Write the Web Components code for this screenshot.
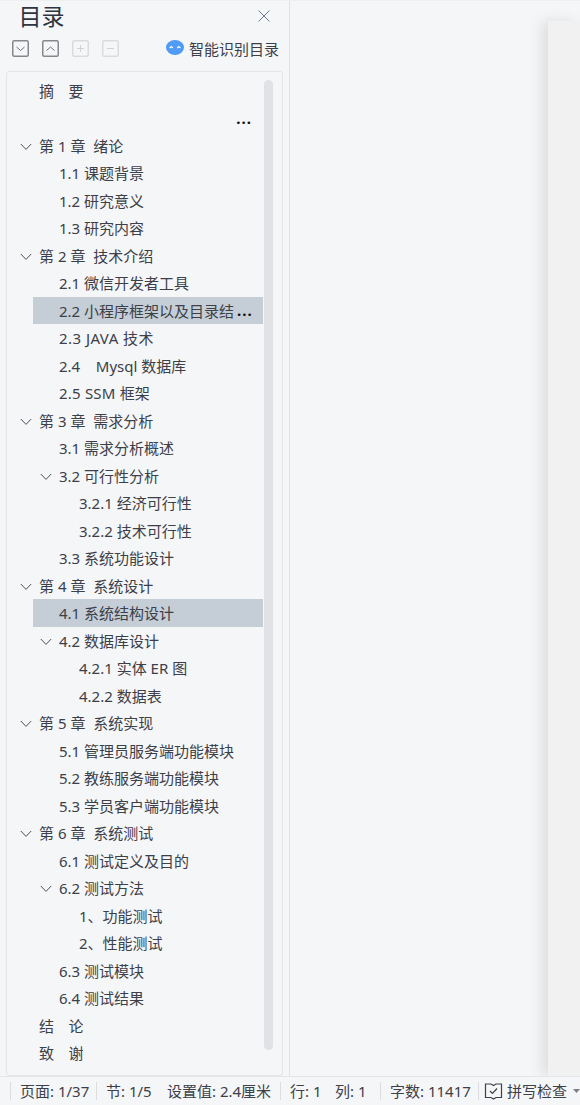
<!DOCTYPE html>
<html lang="zh-CN">
<head>
<meta charset="utf-8">
<style>
html, body { margin: 0; height: 100%; overflow: hidden; background: #f5f6f8; }
body { font-family: "Noto Sans", "Noto Sans CJK SC", sans-serif; color: #3c4048; }
</style>
</head>
<body>
<doc-window>
  <toc-panel slot="side"></toc-panel>
  <status-bar slot="status"></status-bar>
</doc-window>

<script>
// level: 0 chapter, 1 section, 2 subsection. open = has expand arrow
const tocRows = [
    { text: "摘\u00a0\u00a0\u00a0\u00a0要", level: 0, spacing: -0.2 },
    { text: "...", level: 0, dots: true },
    { text: "第 1 章  绪论", level: 0, open: true },
    { text: "1.1 课题背景", level: 1 },
    { text: "1.2 研究意义", level: 1 },
    { text: "1.3 研究内容", level: 1 },
    { text: "第 2 章  技术介绍", level: 0, open: true },
    { text: "2.1 微信开发者工具", level: 1 },
    { text: "2.2 小程序框架以及目录结", level: 1, selected: true, more: true },
    { text: "2.3 JAVA 技术", level: 1, spacing: 0.45 },
    { text: "2.4\u00a0\u00a0\u00a0\u00a0Mysql 数据库", level: 1 },
    { text: "2.5 SSM 框架", level: 1, spacing: 0.2 },
    { text: "第 3 章  需求分析", level: 0, open: true },
    { text: "3.1 需求分析概述", level: 1 },
    { text: "3.2 可行性分析", level: 1, open: true },
    { text: "3.2.1 经济可行性", level: 2 },
    { text: "3.2.2 技术可行性", level: 2 },
    { text: "3.3 系统功能设计", level: 1 },
    { text: "第 4 章  系统设计", level: 0, open: true },
    { text: "4.1 系统结构设计", level: 1, selected: true },
    { text: "4.2 数据库设计", level: 1, open: true },
    { text: "4.2.1 实体 ER 图", level: 2 },
    { text: "4.2.2 数据表", level: 2 },
    { text: "第 5 章  系统实现", level: 0, open: true },
    { text: "5.1 管理员服务端功能模块", level: 1 },
    { text: "5.2 教练服务端功能模块", level: 1 },
    { text: "5.3 学员客户端功能模块", level: 1 },
    { text: "第 6 章  系统测试", level: 0, open: true },
    { text: "6.1 测试定义及目的", level: 1 },
    { text: "6.2 测试方法", level: 1, open: true },
    { text: "1、功能测试", level: 2 },
    { text: "2、性能测试", level: 2 },
    { text: "6.3 测试模块", level: 1 },
    { text: "6.4 测试结果", level: 1 },
    { text: "结\u00a0\u00a0\u00a0\u00a0论", level: 0, spacing: -0.2 },
    { text: "致\u00a0\u00a0\u00a0\u00a0谢", level: 0, spacing: -0.2 }
];

class DocWindow extends HTMLElement {
    constructor() {
        super()
        const shadow = this.attachShadow({ mode: "open" });
        shadow.innerHTML = `
<style>
:host { display: grid; grid-template-rows: 1076px 29px; height: 1105px; width: 580px; overflow: hidden; }
.top { display: flex; min-height: 0; border-top: 1px solid #eeeff1; box-sizing: border-box; }
.canvas { flex: 1; display: flex; justify-content: flex-end; padding-top: 20px; overflow: hidden; }
.page { width: 32px; background: #f1f1f1; box-shadow: -6px 0 14px rgba(0,0,0,0.10); }
</style>
<div class="top">
  <slot name="side"></slot>
  <div class="canvas"><div class="page"></div></div>
</div>
<slot name="status"></slot>`;
    }
}

class TocPanel extends HTMLElement {
    constructor() {
        super()
        const shadow = this.attachShadow({ mode: "open" });
        shadow.innerHTML = `
<style>
:host { display: flex; flex-direction: column; width: 290px; flex: none; box-sizing: border-box; border-right: 1px solid #dfe1e5; padding-left: 6px; padding-right: 6px; }
.title { display: flex; justify-content: space-between; align-items: center; height: 30px; padding: 0 12px 0 12.5px; }
h1 { margin: 0; font-size: 23px; font-weight: 400; color: #2f3540; line-height: 30px; }
.tools { display: flex; align-items: center; height: 35px; margin-bottom: 5px; padding-left: 6px; padding-right: 4px; }
.tools tool-btn + tool-btn { margin-left: 13px; }
.smart { margin-left: auto; display: flex; align-items: center; gap: 5px; font-size: 15px; color: #3c4048; }
.smart svg { margin-bottom: 3px; }
.list { flex: 1; min-height: 0; box-sizing: border-box; border: 1px solid #e3e5e9; border-radius: 3px; padding-top: 4.9px; position: relative; overflow: hidden; }
.thumb { position: absolute; left: 257px; top: 8px; width: 9px; height: 970px; border-radius: 5px; background: #e0e2e5; }
svg { display: block; }
</style>
<div class="title">
  <h1>目录</h1>
  <svg width="14" height="14" viewBox="0 0 14 14" fill="none" stroke="#6f7a94" stroke-width="1"><path d="M1.5 1.5l11 11M12.5 1.5l-11 11"/></svg>
</div>
<div class="tools">
  <tool-btn kind="down"></tool-btn>
  <tool-btn kind="up"></tool-btn>
  <tool-btn kind="plus" faded></tool-btn>
  <tool-btn kind="minus" faded></tool-btn>
  <div class="smart">
    <svg width="18" height="15" viewBox="0 0 18 15"><ellipse cx="9" cy="7.5" rx="9" ry="7.5" fill="#4f9bf5"/><path d="M3.6 8l1.6-1.4L6.8 8M11.2 8l1.6-1.4L14.4 8" fill="none" stroke="#fff" stroke-width="1.2"/></svg>
    <span>智能识别目录</span>
  </div>
</div>
<div class="list"><div class="thumb"></div></div>`;
        const list = shadow.querySelector(".list");
        tocRows.forEach(r => {
            const row = document.createElement("toc-row");
            row.setAttribute("level", r.level);
            row.textContent = r.text;
            if (r.open) row.setAttribute("open", "");
            if (r.selected) row.setAttribute("selected", "");
            if (r.more) row.setAttribute("more", "");
            if (r.dots) row.setAttribute("dots", "");
            if (r.spacing) row.style.letterSpacing = r.spacing + "px";
            list.append(row);
        });
    }
}

class ToolBtn extends HTMLElement {
    connectedCallback() {
        const glyphs = {
            down: "M4.5 7l4 3.5 4-3.5",
            up: "M4.5 10.5l4-3.5 4 3.5",
            plus: "M5 8.5h7M8.5 5v7",
            minus: "M5 8.5h7"
        };
        const faded = this.hasAttribute("faded");
        const c = faded ? "#d9dbde" : "#85888d";
        const ink = faded ? "#d0d2d6" : "#6e7178";
        const shadow = this.attachShadow({ mode: "open" });
        shadow.innerHTML = `
<style>:host { display: block; width: 17px; height: 17px; } svg { display: block; }</style>
<svg width="17" height="17" viewBox="0 0 17 17" fill="none">
  <rect x="0.75" y="0.75" width="15.5" height="15.5" rx="1.5" stroke="${c}" stroke-width="1.5"/>
  <path d="${glyphs[this.getAttribute("kind")]}" stroke="${ink}" stroke-width="1"/>
</svg>`;
    }
}

class TocRow extends HTMLElement {
    connectedCallback() {
        const level = +this.getAttribute("level");
        const shadow = this.attachShadow({ mode: "open" });
        shadow.innerHTML = `
<style>
:host { display: block; height: 27.5px; font-size: 15px; line-height: 27.5px; width: 256px; }
.in { height: 100%; box-sizing: border-box; display: flex; align-items: center; position: relative; margin-left: ${level ? 26 : 0}px; padding-left: ${level ? level * 20 + 6 : 32}px; }
:host([selected]) .in { background: #c5ced6; }
.t { white-space: pre; overflow: hidden; min-width: 0; padding-top: 2px; }
.more { display: none; flex: none; color: #111; font-weight: 700; margin-left: 3px; letter-spacing: 1px; }
:host([more]) .more { display: block; }
:host([dots]) .in { justify-content: flex-end; padding-right: 11px; }
:host([dots]) .t { color: #111; font-weight: 700; letter-spacing: 1px; }
svg { position: absolute; left: ${level ? 7 + (level - 1) * 20 : 13}px; top: 11px; display: none; }
:host([open]) svg { display: block; }
</style>
<div class="in">
  <svg width="12" height="8" viewBox="0 0 12 8" fill="none" stroke="#4b4f56" stroke-width="1"><path d="M0.8 1l5.2 5.4L11.2 1"/></svg>
  <span class="t"><slot></slot></span><span class="more">...</span>
</div>`;
    }
}

class StatusBar extends HTMLElement {
    constructor() {
        super()
        const shadow = this.attachShadow({ mode: "open" });
        shadow.innerHTML = `
<style>
:host { display: grid; grid-template-columns: 10px 86px 71px 113px 55px 45px 98px 1fr; align-items: center; height: 29px; box-sizing: border-box; border-top: 1px solid #e3e5e9; font-size: 15px; color: #3c4048; white-space: nowrap; background: #f5f6f8; overflow: hidden; }
.c { display: flex; align-items: center; min-width: 0; height: 18px; line-height: 18px; }
.sep { border-left: 1px solid #dcdee2; }
.edge { justify-content: flex-end; padding-right: 8px; }
svg { display: block; flex: none; }
</style>
<div class="c edge"><span>1</span></div>
<div class="c sep" style="padding-left:9px"><span>页面: 1/37</span></div>
<div class="c sep" style="padding-left:9px"><span>节: 1/5</span></div>
<div class="c" ><span>设置值: 2.4厘米</span></div>
<div class="c sep" style="padding-left:9px"><span>行: 1</span></div>
<div class="c"><span>列: 1</span></div>
<div class="c sep" style="padding-left:9px"><span>字数: 11417</span></div>
<div class="c sep" style="padding-left:5px">
  <svg width="19" height="19" viewBox="0 0 19 19" fill="none" stroke="#3c4048" stroke-width="1.2"><path d="M1.5 2h5.5l2.5 1.5L12 2h5.5v13.5H12l-2.5 1.5L7 15.5H1.5z"/><path d="M6 9l2.5 2.5L13 6.5"/></svg>
  <span style="margin-left:4px">拼写检查</span>
  <svg style="margin-left:6px" width="7" height="4" viewBox="0 0 7 4"><path d="M0 0h7L3.5 4z" fill="#7b7f86"/></svg>
</div>`;
    }
}

customElements.define("doc-window", DocWindow);
customElements.define("toc-panel", TocPanel);
customElements.define("tool-btn", ToolBtn);
customElements.define("toc-row", TocRow);
customElements.define("status-bar", StatusBar);
</script>
</body>
</html>
